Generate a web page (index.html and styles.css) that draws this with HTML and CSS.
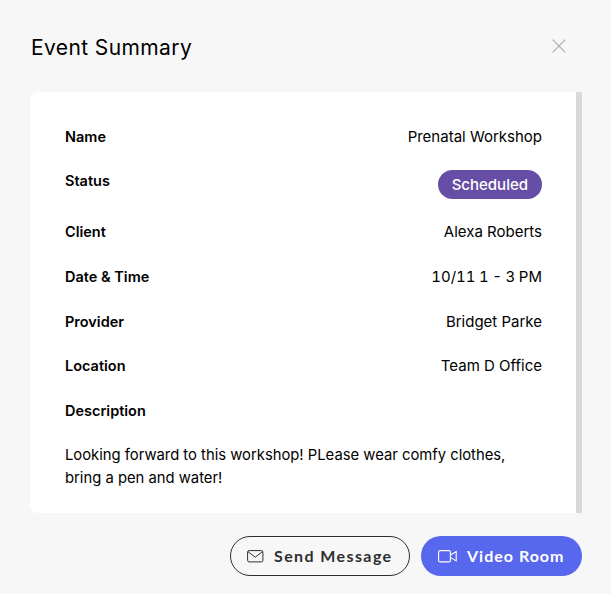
FILE: index.html
```html
<!DOCTYPE html>
<html lang="en">
<head>
<meta charset="utf-8">
<title>Event Summary</title>
<link rel="stylesheet" href="styles.css">
</head>
<body>
<div class="dialog">
  <header class="head">
    <h1 class="title">Event Summary</h1>
    <button class="close" aria-label="Close">
      <svg width="14" height="14" viewBox="0 0 14 14"><path d="M.7.7l12.6 12.6M13.3.7L.7 13.3" fill="none" stroke="#a9adb0" stroke-width="1.2"/></svg>
    </button>
  </header>
  <div class="panel">
    <section class="card">
      <div class="row r-name"><span class="label">Name</span><span class="value">Prenatal Workshop</span></div>
      <div class="row r-status"><span class="label">Status</span><span class="badge">Scheduled</span></div>
      <div class="row r-client"><span class="label">Client</span><span class="value">Alexa Roberts</span></div>
      <div class="row r-date"><span class="label">Date &amp; Time</span><span class="value value-date">10/11 1 - 3 PM</span></div>
      <div class="row r-prov"><span class="label">Provider</span><span class="value">Bridget Parke</span></div>
      <div class="row r-loc"><span class="label">Location</span><span class="value">Team D Office</span></div>
      <div class="row r-desc"><span class="label">Description</span></div>
      <p class="desc">Looking forward to this workshop! PLease wear comfy clothes, bring a pen and water!</p>
    </section>
    <div class="scrollbar"></div>
  </div>
  <footer class="actions">
    <button class="btn btn-outline">
      <svg width="17" height="13" viewBox="0 0 17 13"><rect x=".6" y=".6" width="15.3" height="11.3" rx="1.5" fill="none" stroke="#2e2e2e" stroke-width="1"/><path d="M.9 1.6l7.3 5.6 7.4-5.6" fill="none" stroke="#2e2e2e" stroke-width="1"/></svg>
      <span class="btn-text">Send Message</span>
    </button>
    <button class="btn btn-primary">
      <svg width="19" height="13" viewBox="0 0 19 13"><rect x=".6" y=".6" width="11.8" height="11.3" rx="1.5" fill="none" stroke="#fff" stroke-width="1.1"/><path d="M12.6 5l5.6-3.4v9.3L12.6 7.6" fill="none" stroke="#fff" stroke-width="1.1"/></svg>
      <span class="btn-text">Video Room</span>
    </button>
  </footer>
</div>
</body>
</html>
```
FILE: styles.css
```css
* { box-sizing: border-box; }
html, body { margin: 0; height: 100%; }
body {
  background: #f7f7f7;
  color: #000;
  font-family: "Inter", "Liberation Sans", sans-serif;
  font-size: 15px;
}
.dialog { width: 611px; height: 594px; padding: 0 29px 0 30px; overflow: hidden; }
.head { display: flex; justify-content: space-between; align-items: center; height: 92px; padding: 0 16px 0 1px; }
.title { margin: 0 0 -2px; font-size: 21px; font-weight: 400; letter-spacing: .4px; font-family: "Inter", sans-serif; }
.close { border: 0; background: none; padding: 0; display: flex; }
.panel { display: flex; height: 421px; }
.card {
  flex: 1;
  background: #fff;
  border-radius: 8px 0 0 8px;
  padding: 35px 34px 0 35px;
}
.scrollbar { width: 6px; background: #d9d9d9; }
.row { display: flex; justify-content: space-between; align-items: flex-start; line-height: 20px; }
.r-name { height: 20px; }
.r-status { height: 49px; margin-top: 24px; }
.r-client { height: 20px; margin-top: 2px; }
.r-date { height: 20px; margin-top: 25px; }
.r-prov { height: 20px; margin-top: 25px; }
.r-loc { height: 20px; margin-top: 24px; }
.r-desc { height: 20px; margin-top: 25px; }
.label { font-weight: 600; font-size: 14.5px; }
.value { font-size: 15px; }
.value-date { font-feature-settings: "tnum"; word-spacing: -.5px; }
.badge {
  margin-top: -1px;
  height: 29px;
  line-height: 29px;
  padding: 0 14px;
  border-radius: 15px;
  background: #664ea6;
  color: #fff;
  font-weight: 500;
  font-size: 15px;
}
.desc { margin: 23px 0 0; line-height: 23px; font-size: 14.8px; }
.actions { display: flex; justify-content: flex-end; gap: 11px; margin-top: 23px; }
.btn {
  display: flex;
  align-items: center;
  height: 40px;
  border-radius: 20px;
  font-family: "Lato", sans-serif;
  font-weight: 700;
  font-size: 16px;
  letter-spacing: 1px;
  white-space: nowrap;
}
.btn-text { padding-bottom: 2px; }
.btn-outline { width: 180px; padding: 0 0 0 16px; gap: 10px; background: transparent; border: 1px solid #2e2e2e; color: #2e2e2e; letter-spacing: 1.4px; }
.btn-primary { width: 161px; padding: 0 0 0 17px; gap: 10px; background: #5767ee; border: 0; color: #fff; }
```
